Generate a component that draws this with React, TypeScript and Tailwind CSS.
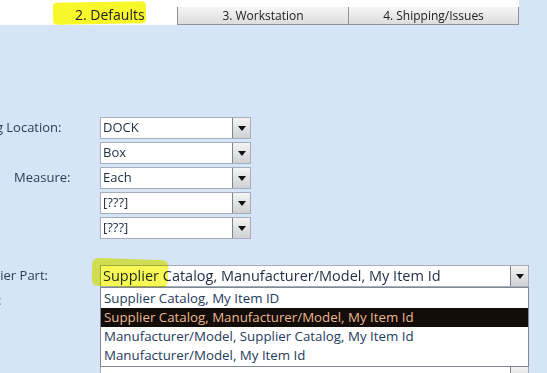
import React from 'react';

const Arrow = () => (
  <div className="flex h-full w-[18px] items-center justify-center border-l border-[#7d8590] bg-gradient-to-b from-[#f4f4f4] to-[#cfd1d4]">
    <svg width="8" height="5" viewBox="0 0 8 5">
      <path d="M0 0 H8 L4 5 Z" fill="#111" />
    </svg>
  </div>
);

const Combo = ({ value, wide = false }: { value: string; wide?: boolean }) => (
  <div
    className={`flex h-[22px] items-stretch border border-[#a4adb8] bg-white ${
      wide ? 'w-[429px]' : 'w-[151px]'
    }`}
  >
    <div
      className={`flex flex-1 items-center pl-[2px] text-[#1d2c44] whitespace-nowrap overflow-hidden ${
        wide ? 'text-[14.5px]' : 'text-[13px]'
      }`}
    >
      {value}
    </div>
    <Arrow />
  </div>
);

const Row = ({ label, shift, value, wide }: { label: string; shift: number; value: string; wide?: boolean }) => (
  <div className="flex h-[22px] items-center">
    <div className="w-[100px] overflow-hidden text-[13px] text-[#2c3e55] whitespace-nowrap">
      <span className="block" style={{ marginLeft: shift }}>
        {label}
      </span>
    </div>
    <Combo value={value} wide={wide} />
  </div>
);

const options = [
  'Supplier Catalog, My Item ID',
  'Supplier Catalog, Manufacturer/Model, My Item Id',
  'Manufacturer/Model, Supplier Catalog, My Item Id',
  'Manufacturer/Model, My Item Id',
];

export default function App() {
  return (
    <div className="relative h-[373px] w-[547px] overflow-hidden bg-white font-['Open_Sans','Noto_Sans',sans-serif]">
      {/* tab strip */}
      <div className="flex h-[25px] items-end">
        <div className="relative h-full w-[177px]">
          <div className="absolute left-[53px] top-[2px] h-[22px] w-[93px] -rotate-1 rounded-[4px] bg-[#f7f72a] blur-[0.5px]" />
          <span className="absolute left-[75px] top-[4px] text-[14px] text-[#222]">2. Defaults</span>
        </div>
        <div className="flex h-[18px] w-[172px] items-center justify-center border-x border-b border-[#8e9196] bg-gradient-to-b from-[#f6f6f6] to-[#dcdcdc] text-[12px] text-[#222]">
          3. Workstation
        </div>
        <div className="flex h-[18px] w-[170px] items-center justify-center border-r border-b border-[#8e9196] bg-gradient-to-b from-[#f6f6f6] to-[#dcdcdc] text-[12px] text-[#222]">
          4. Shipping/Issues
        </div>
        <div className="h-full flex-1 bg-[#d6e4f8]" />
      </div>

      {/* form body */}
      <div className="h-[348px] bg-[#d6e4f8] pt-[92px]">
        <div className="flex flex-col gap-[3px]">
          <Row label="Receiving Location:" shift={-54} value="DOCK" />
          <Row label="" shift={0} value="Box" />
          <Row label="Measure:" shift={14} value="Each" />
          <Row label="" shift={0} value="[???]" />
          <Row label="" shift={0} value="[???]" />
        </div>
        <div className="mt-[26px] flex flex-col gap-[3px]">
          <Row label="Supplier Part:" shift={-34} value="Supplier Catalog, Manufacturer/Model, My Item Id" wide />
          <Row label="Sort:" shift={-27} value="" wide />
          <Row label="" shift={0} value="" wide />
          <Row label="" shift={0} value="" wide />
          <Row label="" shift={0} value="" wide />
        </div>
      </div>

      {/* marker highlight on the open combo */}
      <div className="absolute left-[92px] top-[259px] h-[28px] w-[76px] rotate-2 rounded-[6px] bg-[#f7f72a] opacity-80 mix-blend-multiply blur-[0.5px]" />

      {/* open dropdown list */}
      <div className="absolute left-[100px] top-[287px] w-[429px] border border-[#7f8893] bg-white py-[1px]">
        {options.map((o, i) => (
          <div
            key={o}
            className={`flex h-[19px] items-center pl-[3px] text-[13.3px] whitespace-nowrap ${
              i === 1 ? 'bg-[#140c08] text-[#eab892]' : 'text-[#1f3b5e]'
            }`}
          >
            {o}
          </div>
        ))}
      </div>
    </div>
  );
}
